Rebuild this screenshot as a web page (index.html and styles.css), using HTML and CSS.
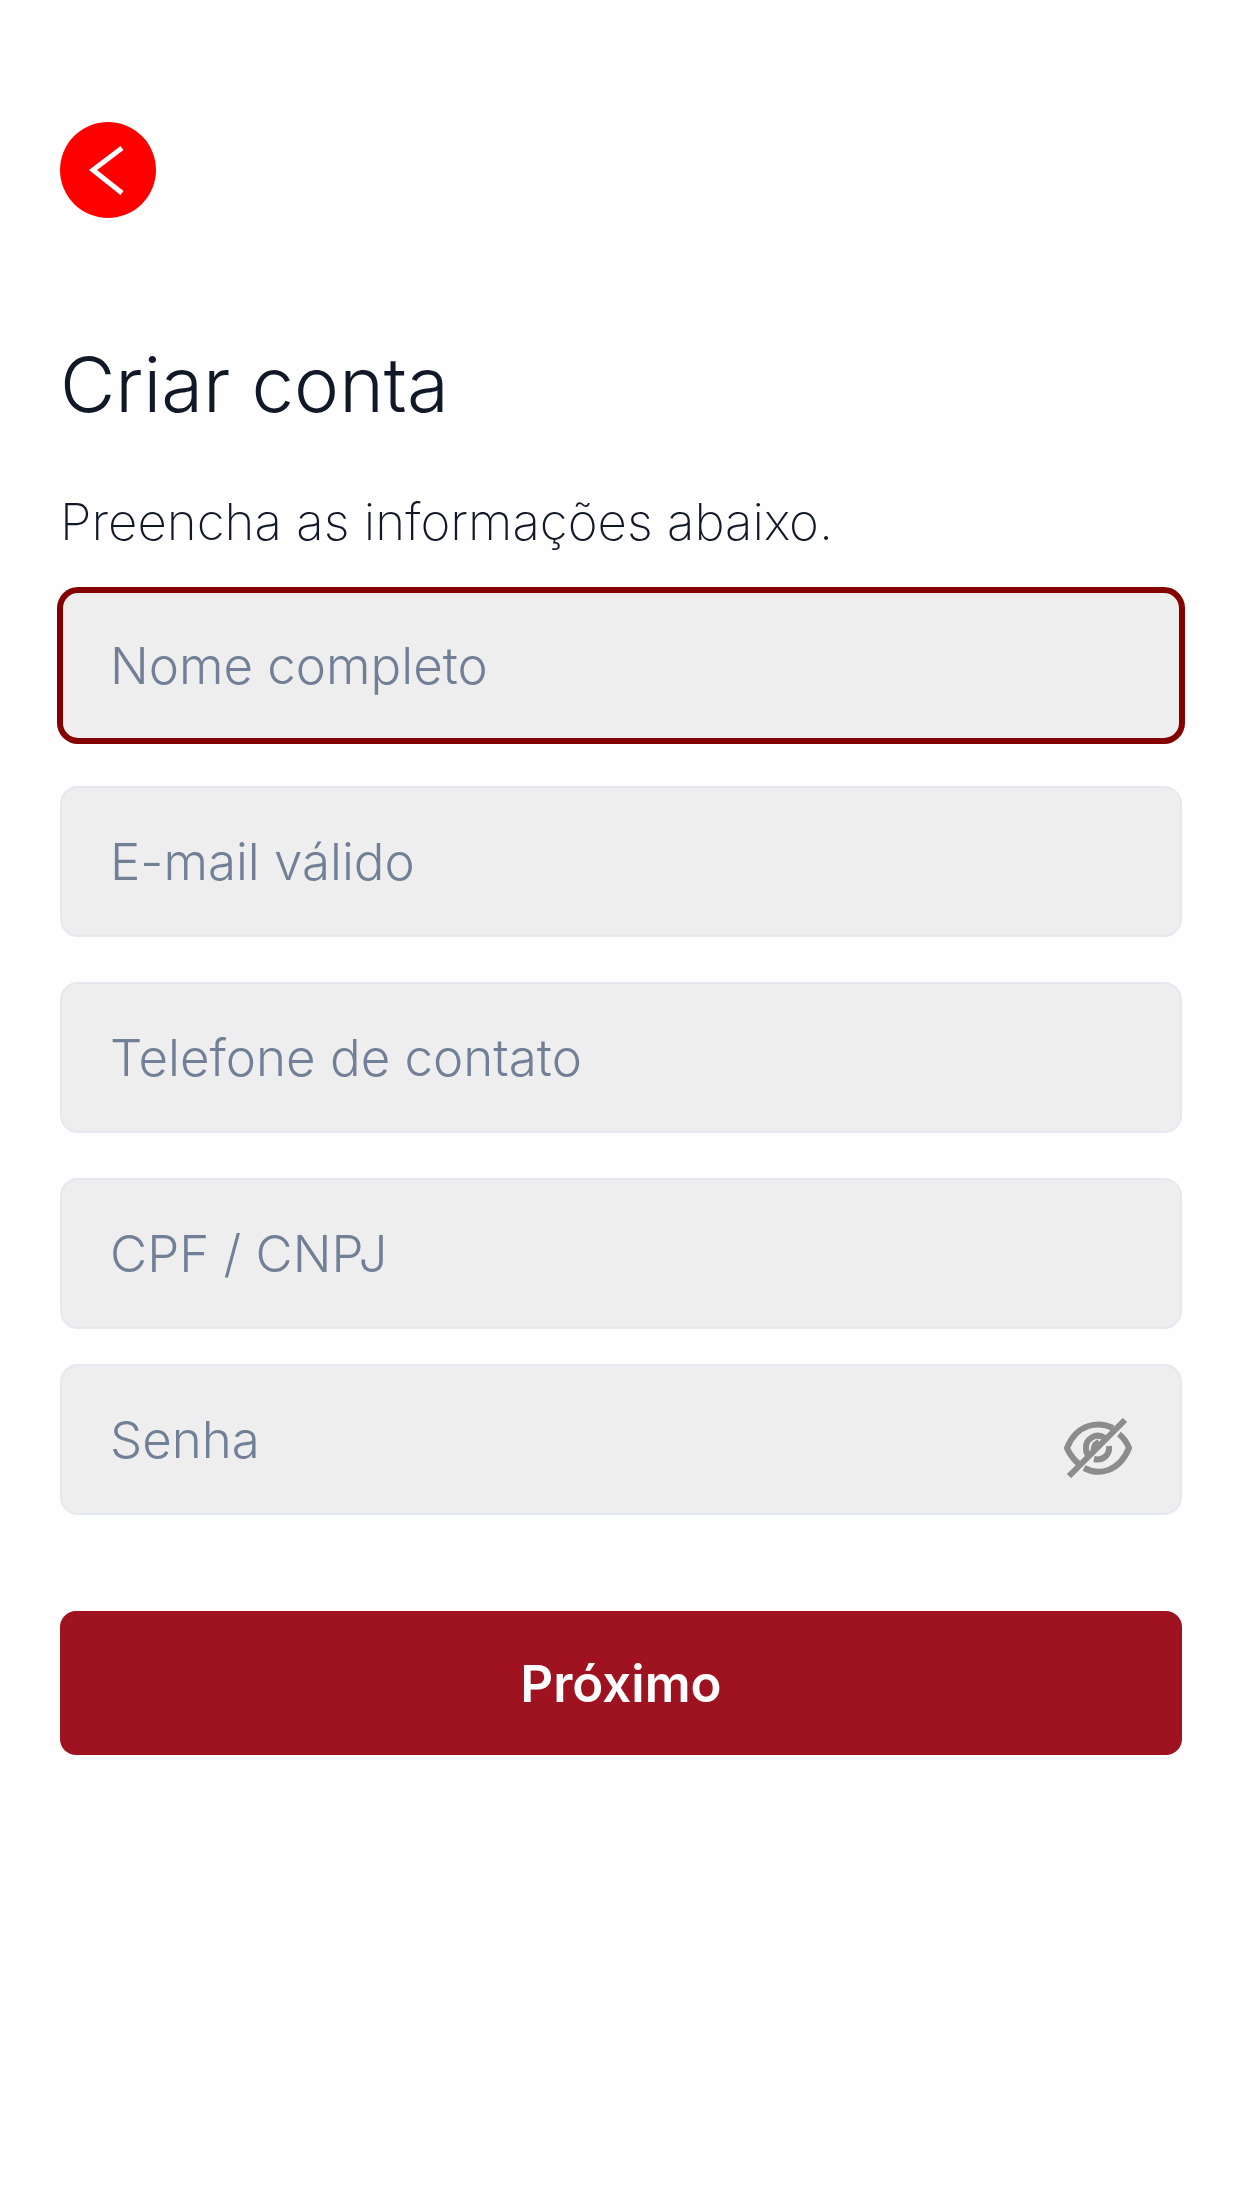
FILE: index.html
```html
<!DOCTYPE html>
<html lang="pt-BR">
<head>
    <meta charset="UTF-8">
    <meta name="viewport" content="width=device-width, initial-scale=1.0">
    <title>Criar conta</title>
    <link rel="stylesheet" href="styles.css">
</head>
<body>
    <main class="page">
        <button class="back" type="button" aria-label="Voltar">
            <svg viewBox="0 0 96 96" fill="none" stroke="#fff" stroke-width="5">
                <path d="M62 26 L33 48 L62 71"/>
            </svg>
        </button>

        <h1>Criar conta</h1>
        <p class="intro">Preencha as informações abaixo.</p>

        <form class="form">
            <div class="fields">
                <input class="field active" type="text" placeholder="Nome completo" aria-label="Nome completo">
                <input class="field" type="email" placeholder="E-mail válido" aria-label="E-mail válido">
                <input class="field" type="tel" placeholder="Telefone de contato" aria-label="Telefone de contato">
                <input class="field" type="text" placeholder="CPF / CNPJ" aria-label="CPF / CNPJ">
            </div>
            <div class="password">
                <input class="field" type="password" placeholder="Senha" aria-label="Senha">
                <button class="toggle" type="button" aria-label="Mostrar senha">
                    <svg viewBox="0 0 68 60" fill="none" stroke="#8c8c8c" stroke-width="6">
                        <path d="M49 10 C35 3 13 5 3 30 C6 37 9 41 15 46"/>
                        <path d="M55 16 Q62 22 65 30 C55 54 35 58 20 50"/>
                        <path d="M41 20 C32 14 21 21 22 31 Q22 35 25 38"/>
                        <path d="M45 28 C46 37 39 43 30 41"/>
                        <path d="M35 24 Q29 27 30 33"/>
                        <path d="M5 58 L61 2"/>
                    </svg>
                </button>
            </div>
            <button class="submit" type="submit">Próximo</button>
        </form>
    </main>
</body>
</html>
```
FILE: styles.css
```css
* {
    box-sizing: border-box;
}
body {
    font-family: Inter, "Open Sans", sans-serif;
    margin: 0;
    background-color: #fefefe;
    color: #111827;
}
button {
    font-family: inherit;
    border: none;
    padding: 0;
    cursor: pointer;
}
svg {
    display: block;
    width: 100%;
}
.page {
    padding: 122px 60px 60px;
}
.back {
    display: block;
    width: 96px;
    height: 96px;
    border-radius: 50%;
    background-color: #fe0000;
}
h1 {
    margin: 116px 0 0;
    font-size: 76px;
    font-weight: 300;
    line-height: 100px;
}
.intro {
    margin: 58px 0 0;
    font-size: 51px;
    font-weight: 200;
    line-height: 60px;
}
.form {
    margin-top: 38px;
}
.fields {
    display: flex;
    flex-direction: column;
    gap: 45px;
}
.field {
    display: block;
    width: 100%;
    height: 151px;
    padding: 0 48px;
    border: 2px solid #e4e8f0;
    border-radius: 18px;
    background-color: #eeeeee;
    font-family: inherit;
    font-size: 51px;
    font-weight: 300;
    color: #111827;
}
.field::placeholder {
    color: #718096;
    opacity: 1;
}
.active {
    border: 3px solid #850000;
    box-shadow: 0 0 0 3px #850000;
    padding: 0 47px;
}
.password {
    position: relative;
    margin-top: 35px;
}
/* sits over the right end of the password box */
.toggle {
    position: absolute;
    top: 54px;
    right: 50px;
    width: 68px;
    background: none;
}
.submit {
    display: block;
    width: 100%;
    height: 144px;
    margin-top: 96px;
    border-radius: 16px;
    background-color: #9f1220;
    color: #fff;
    font-size: 51px;
    font-weight: 600;
}
```
